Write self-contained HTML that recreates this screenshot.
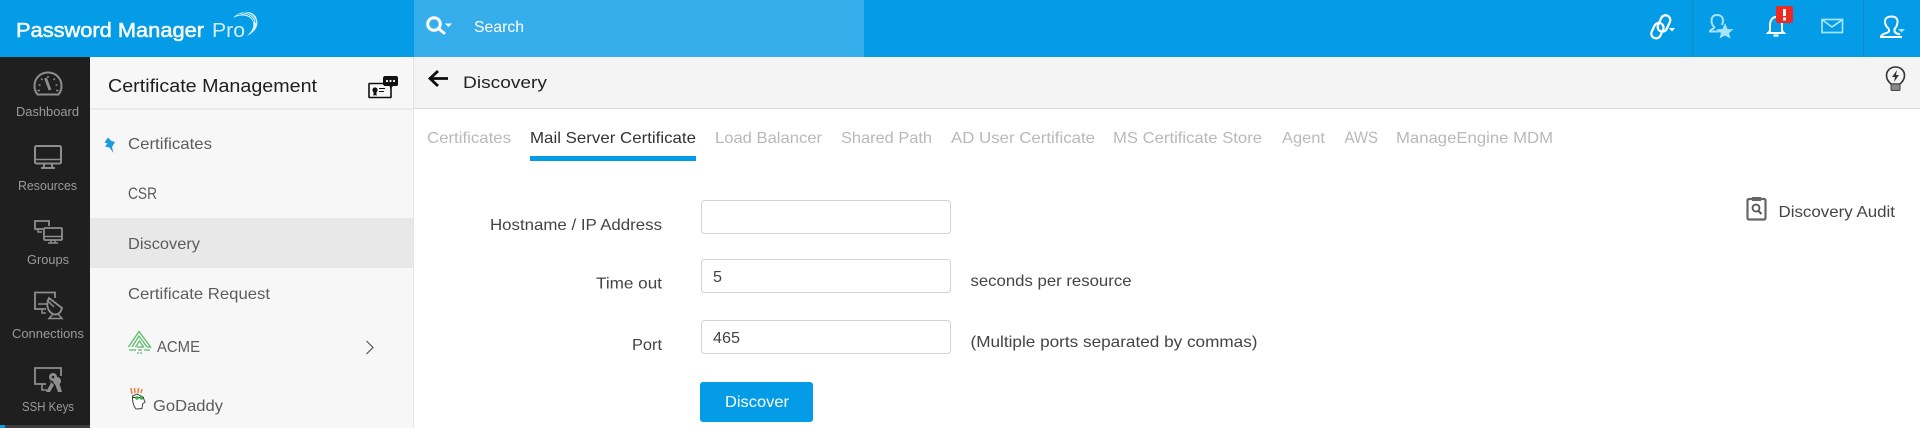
<!DOCTYPE html>
<html><head><meta charset="utf-8"><title>Discovery</title>
<style>
html,body{margin:0;padding:0;background:#fff;overflow:hidden}
svg{display:block}
text{font-family:"Liberation Sans",Arial,sans-serif;white-space:pre}
.nav{font-size:13px;fill:#9b9b9b}
.mi{font-size:16px;fill:#5c5c5c}
.tab{font-size:16px;fill:#b9b9b9}
.lb{font-size:16px;fill:#444}
</style></head>
<body>
<svg xmlns="http://www.w3.org/2000/svg" width="1920" height="428" viewBox="0 0 1920 428">
<rect width="1920" height="428" fill="#fff"/>
<rect width="1920" height="57" fill="#049ce6"/>
<rect x="414" width="450" height="57" fill="#36aeeb"/>
<rect y="57" width="90" height="371" fill="#1f1f1f"/>
<rect y="425" width="90" height="3" fill="#3c3c3c"/><rect y="425" width="5" height="3" fill="#049ce6"/>
<rect x="90" y="57" width="323" height="371" fill="#f7f7f7"/>
<rect x="413" y="57" width="1" height="371" fill="#e4e4e4"/>
<rect x="90" y="108.500" width="323" height="1" fill="#dfdfdf"/>
<rect x="90" y="218" width="323" height="50" fill="#e8e8e8"/>
<rect x="414" y="57" width="1506" height="51" fill="#f4f4f4"/>
<rect x="414" y="108" width="1506" height="1" fill="#dddddd"/>
<rect x="1692" width="1" height="57" fill="#0b8ccb"/><rect x="1863" width="1" height="57" fill="#0b8ccb"/>

<!-- logo -->
<text x="16" y="37" font-size="20" fill="#f8fcff" stroke="#f8fcff" stroke-width=".55" textLength="188" lengthAdjust="spacingAndGlyphs">Password Manager</text>
<text x="212" y="37" font-size="20" fill="#d5effc" textLength="33" lengthAdjust="spacingAndGlyphs">Pro</text>
<g fill="#d9f2fd">
<path d="M233 18C240 10 252 10 256 17C259 23 258 31 246 36.500C253 31 255 25 252 20C248 15 241 14 233 18Z"/>
</g>
<path d="M238 15C244 12 252 15 254 22M243 12.500C249 12 255 16 256 23" fill="none" stroke="#049ce6" stroke-width=".7"/>

<!-- search -->
<g fill="none" stroke="#fff" stroke-width="3"><circle cx="434" cy="24" r="6.300"/><path d="M439 29L444 33" stroke-linecap="round"/></g>
<path d="M445 23.500H452L448.500 27Z" fill="#fff"/>
<text x="474" y="32" font-size="16" fill="#fff" textLength="50" lengthAdjust="spacingAndGlyphs">Search</text>

<!-- header right icons -->
<g fill="none" stroke="#fff" stroke-width="2.200">
<rect x="1659" y="15" width="9.500" height="17" rx="4.700" transform="rotate(25 1664 24)"/>
<rect x="1652.500" y="22.500" width="9.500" height="16" rx="4.700" transform="rotate(25 1657 31)"/>
</g>
<path d="M1669 28H1675L1672 31.500Z" fill="#fff"/>
<g fill="none" stroke="#a6e4fb" stroke-width="2">
<path d="M1714.500 27.500C1712.500 25.500 1711.500 23 1711.500 20.500C1711.500 16.500 1714 15 1717 15C1720.500 15 1723 17 1723 20.500C1723 22 1722.500 23.500 1722 25M1714.500 27C1714.500 29 1710 29 1710 31.500H1719.500"/>
</g>
<path d="M1725 23L1727.500 29L1733.500 29.300L1729 33L1730.500 38.500L1725 35.500L1719.500 38.500L1721 33L1716.500 29.300L1722.500 29Z" fill="#a6e4fb"/>
<g fill="none" stroke="#fff" stroke-width="2">
<path d="M1770 31V25C1770 20.500 1772.500 17 1776 17C1779.500 17 1782 20.500 1782 25V31L1784 33H1768Z"/>
<path d="M1773.500 35.500H1778.500" stroke-width="2.200"/>
</g>
<rect x="1776" y="6" width="17" height="17" rx="2" fill="#f02822"/>
<rect x="1783" y="9" width="3" height="7" fill="#fff"/><rect x="1783" y="17.500" width="3" height="3" fill="#fff"/>
<g fill="none" stroke="#a6e4fb" stroke-width="1.700"><rect x="1822" y="19.500" width="20.500" height="13"/><path d="M1822.500 20L1832 27L1842 20"/></g>
<g fill="none" stroke="#fff" stroke-width="2">
<path d="M1889 29C1886.500 27 1885 24 1885 21.500C1885 18 1888 16.500 1891.500 16.500C1895 16.500 1897.500 18 1897.500 21.500C1897.500 24 1896.500 27 1894.500 29V31C1894.500 33 1897 33.500 1900 34.500M1889 29V31C1889 33.500 1881 33 1881 37H1902"/>
</g>
<path d="M1898 29H1905L1901.500 32.500Z" fill="#a6e4fb"/>

<!-- sidebar icons -->
<g fill="none" stroke="#8e8e8e">
<path d="M37.500 94.500C35 91.500 34.500 88.500 34.500 86C34.500 78 40.500 72.500 48 72.500C55.500 72.500 61.500 78 61.500 86C61.500 88.500 61 91.500 58.500 94.500Z" stroke-width="2"/>
<path d="M48 76V78M38.500 85H40.500M55.500 85H57.500M41 78.500L42.500 80M55 78.500L53.500 80M37.500 90.500H40M56 90.500H58.500" stroke-width="1.400"/>
<path d="M45.500 78L50 90" stroke-width="2.800"/>
<rect x="35" y="146" width="26" height="17.500" rx="1.500" stroke-width="2"/>
<path d="M35 159.500H61" stroke-width="1.500"/><path d="M44 163.500V167M52 163.500V167M41 168H55" stroke-width="2"/>
<path d="M43 229H35V221H49V226" stroke-width="1.800"/><path d="M38 229V232H42" stroke-width="1.500"/>
<rect x="44" y="228" width="18" height="12" rx="1" stroke-width="1.800"/>
<path d="M44 236.500H62M51 240V242.500M55 240V242.500M48 243H58" stroke-width="1.500"/>
<path d="M46 309H35V292.500H55V298" stroke-width="1.800"/><path d="M38 304H47M42 309V313H46" stroke-width="1.500"/>
<path d="M49 298C46 304 47 311 53 314C58 316 61 312 62 308Z" stroke-width="1.800"/>
<path d="M54 307L47 300M53 314L49 318.500H62L58 314" stroke-width="1.500"/>
<path d="M46 384H35V368H61V376" stroke-width="1.800"/><path d="M42 384V390H47" stroke-width="1.600"/>
</g>
<g fill="#8e8e8e">
<circle cx="53" cy="377" r="4"/><circle cx="57" cy="381" r="4"/>
<path d="M49 380L51 383L46 392H50L54 385ZM55 384L58 392H62L59 382Z"/>
</g>
<circle cx="53" cy="377" r="1.300" fill="#1f1f1f"/>
<text class="nav" x="16" y="116" textLength="63" lengthAdjust="spacingAndGlyphs">Dashboard</text>
<text class="nav" x="18" y="190" textLength="59" lengthAdjust="spacingAndGlyphs">Resources</text>
<text class="nav" x="27" y="264" textLength="42" lengthAdjust="spacingAndGlyphs">Groups</text>
<text class="nav" x="12" y="338" textLength="72" lengthAdjust="spacingAndGlyphs">Connections</text>
<text class="nav" x="22" y="411" textLength="52" lengthAdjust="spacingAndGlyphs">SSH Keys</text>

<!-- panel -->
<text x="108" y="92" font-size="18" fill="#1e1e1e" textLength="209" lengthAdjust="spacingAndGlyphs">Certificate Management</text>
<g>
<rect x="369" y="83.500" width="22" height="14" rx=".5" fill="#f7f7f7" stroke="#111" stroke-width="1.600"/>
<circle cx="375" cy="90" r="2.600" fill="#111"/><path d="M373.500 92V96L375 95L376.500 96V92Z" fill="#111"/>
<path d="M379 88.500H385M379 91.500H384" stroke="#111" stroke-width="1"/>
<path d="M385 76H396C397.500 76 398 77 398 78V84C398 85.500 397.500 86 396 86H393L390.500 89L389.500 86H385C384 86 383 85 383 84V78C383 77 384 76 385 76Z" fill="#111"/>
<circle cx="387" cy="81" r="1.100" fill="#fff"/><circle cx="390.500" cy="81" r="1.100" fill="#fff"/><circle cx="394" cy="81" r="1.100" fill="#fff"/>
</g>
<path d="M108 137.500L111.500 141L115 142L112 147L113.500 153L109.500 147.500L105 146.500L107.500 143.500L104.500 142.500Z" fill="#1a9be0"/>
<text class="mi" x="128" y="149" textLength="84" lengthAdjust="spacingAndGlyphs">Certificates</text>
<text x="128" y="199" font-size="17" fill="#5c5c5c" textLength="29" lengthAdjust="spacingAndGlyphs">CSR</text>
<text class="mi" x="128" y="249" textLength="72" lengthAdjust="spacingAndGlyphs">Discovery</text>
<text class="mi" x="128" y="299" textLength="142" lengthAdjust="spacingAndGlyphs">Certificate Request</text>
<g fill="none" stroke="#5cbb6b" stroke-width="1.300">
<path d="M128.500 347L139 331.500L150.500 347H147"/><path d="M132 347L139 336L147 347"/>
<path d="M135.500 347L139.500 341L143.500 347H137"/>
<path d="M129 350H150" stroke-dasharray="7 2 4 2 7"/><path d="M137 353H142" stroke-dasharray="2 1"/>
</g>
<text class="mi" x="157" y="352" textLength="43" lengthAdjust="spacingAndGlyphs">ACME</text>
<path d="M366.500 341L373 347.500L366.500 354" fill="none" stroke="#555" stroke-width="1.200"/>
<g>
<path d="M132 394L131 388M135 393L134.500 388M138 393L138.500 388M141 393L142 389" stroke="#ee7a33" stroke-width="1.500" fill="none"/>
<path d="M132.500 396C132 400 133.500 406 136 409L142 408.500L142.500 404L145 402L143 397L137 394Z" fill="#fff" stroke="#444" stroke-width="1"/>
<path d="M133 397.500H144" stroke="#222" stroke-width="1"/>
<circle cx="137" cy="398" r="1.800" fill="#35b24a"/><circle cx="141.500" cy="398" r="1.800" fill="#35b24a"/>
</g>
<text class="mi" x="153" y="411" textLength="70" lengthAdjust="spacingAndGlyphs">GoDaddy</text>

<!-- content header -->
<path d="M448 78.500H431M438 71L430 78.500L438 86" fill="none" stroke="#0c0c0c" stroke-width="2.800"/>
<text x="463" y="88" font-size="17" fill="#222" textLength="84" lengthAdjust="spacingAndGlyphs">Discovery</text>
<g fill="none" stroke="#333" stroke-width="1.600">
<path d="M1891 84C1888 81 1886.500 79 1886.500 75.500C1886.500 70.500 1890.500 67 1895.500 67C1900.500 67 1904.500 70.500 1904.500 75.500C1904.500 79 1903 81 1900 84Z"/>
</g>
<path d="M1897 70L1892 77H1895L1894 82L1899 75H1896Z" fill="#333"/>
<rect x="1891" y="84" width="9" height="6.500" rx="1" fill="#888" stroke="#444" stroke-width="1"/>

<!-- tabs -->
<text class="tab" x="427" y="143" textLength="84" lengthAdjust="spacingAndGlyphs">Certificates</text>
<text x="530" y="143" font-size="16" fill="#333" textLength="166" lengthAdjust="spacingAndGlyphs">Mail Server Certificate</text>
<text class="tab" x="715" y="143" textLength="107" lengthAdjust="spacingAndGlyphs">Load Balancer</text>
<text class="tab" x="841" y="143" textLength="91" lengthAdjust="spacingAndGlyphs">Shared Path</text>
<text class="tab" x="951" y="143" textLength="144" lengthAdjust="spacingAndGlyphs">AD User Certificate</text>
<text class="tab" x="1113" y="143" textLength="149" lengthAdjust="spacingAndGlyphs">MS Certificate Store</text>
<text class="tab" x="1282" y="143" textLength="43" lengthAdjust="spacingAndGlyphs">Agent</text>
<text x="1344.500" y="143" font-size="17" fill="#b9b9b9" textLength="33.500" lengthAdjust="spacingAndGlyphs">AWS</text>
<text class="tab" x="1396" y="143" textLength="157" lengthAdjust="spacingAndGlyphs">ManageEngine MDM</text>
<rect x="530" y="156" width="166" height="5" fill="#049ce6"/>

<!-- form -->
<text class="lb" x="490" y="230" textLength="172" lengthAdjust="spacingAndGlyphs">Hostname / IP Address</text>
<text class="lb" x="596" y="288.500" textLength="66" lengthAdjust="spacingAndGlyphs">Time out</text>
<text class="lb" x="632" y="350" textLength="30" lengthAdjust="spacingAndGlyphs">Port</text>
<g fill="#fff" stroke="#d2d2d2" stroke-width="1">
<rect x="701.500" y="200.500" width="249" height="33" rx="3"/>
<rect x="701.500" y="259.500" width="249" height="33" rx="3"/>
<rect x="701.500" y="320.500" width="249" height="33" rx="3"/>
</g>
<text class="lb" x="713" y="282" textLength="9" lengthAdjust="spacingAndGlyphs">5</text>
<text class="lb" x="713" y="343" textLength="27" lengthAdjust="spacingAndGlyphs">465</text>
<text class="lb" x="970.500" y="286" textLength="161" lengthAdjust="spacingAndGlyphs">seconds per resource</text>
<text class="lb" x="970.500" y="347" textLength="287" lengthAdjust="spacingAndGlyphs">(Multiple ports separated by commas)</text>
<rect x="700" y="382" width="113" height="40" rx="3" fill="#049ce6"/>
<text x="725" y="407" font-size="16" fill="#fff" textLength="64" lengthAdjust="spacingAndGlyphs">Discover</text>

<!-- audit -->
<rect x="1747.500" y="199" width="18" height="20.500" rx="1.500" fill="none" stroke="#666" stroke-width="2.200"/>
<rect x="1752" y="197" width="9" height="4" fill="#666"/>
<circle cx="1756" cy="208" r="3.500" fill="none" stroke="#555" stroke-width="1.800"/>
<path d="M1758.500 211L1761.500 214" stroke="#555" stroke-width="2"/>
<text class="lb" x="1778.500" y="217" textLength="116.500" lengthAdjust="spacingAndGlyphs">Discovery Audit</text>
</svg>
</body></html>
